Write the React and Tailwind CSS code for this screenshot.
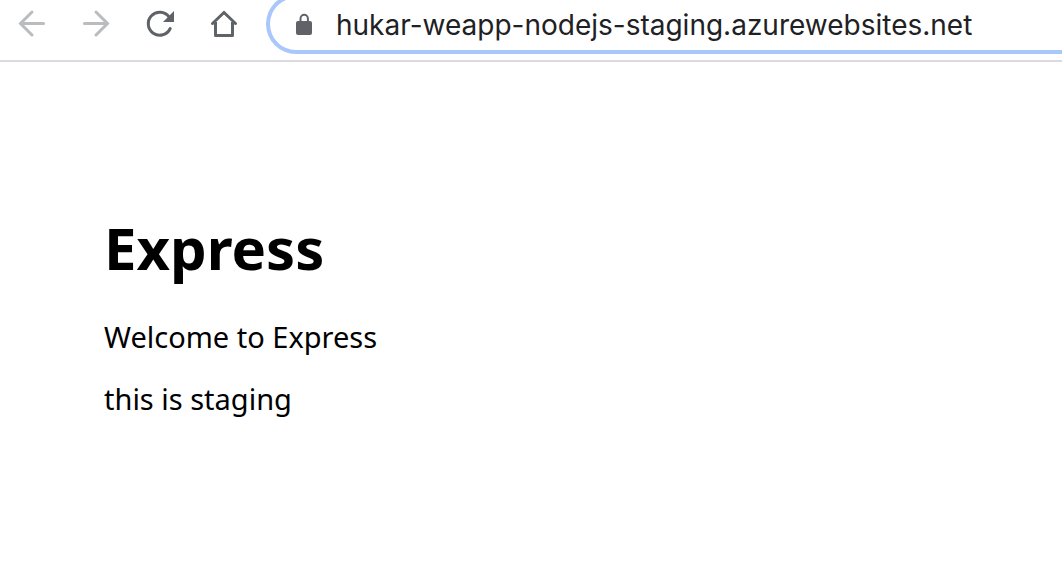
function ToolbarButton({ label, disabled, children }) {
  return (
    <button
      type="button"
      aria-label={label}
      disabled={disabled}
      className={disabled ? "text-[#babcbe]" : "text-[#5f6368]"}
    >
      <svg viewBox="0 0 32 32" className="block size-8" fill="none" stroke="currentColor" strokeWidth="3">
        {children}
      </svg>
    </button>
  );
}

function BrowserBar() {
  return (
    <header className="flex h-[62px] items-end gap-[26px] border-b-2 border-[#dadae0] pb-1.5 pl-4">
      <nav aria-label="Browser" className="flex h-[60px] shrink-0 items-center gap-8">
        <ToolbarButton label="Back" disabled>
          <path d="M27.5 15.5H5M16 4 4.5 15.5 16 27" strokeLinecap="round" />
        </ToolbarButton>
        <ToolbarButton label="Forward" disabled>
          <path d="M4.5 15.5H27M16 4l11.5 11.5L16 27" strokeLinecap="round" />
        </ToolbarButton>
        <ToolbarButton label="Reload">
          <path d="M25 8.8A11.5 11.5 0 1 0 26.2 20.5" strokeLinecap="round" />
          <path d="M30 3v11H19z" fill="currentColor" stroke="none" />
        </ToolbarButton>
        <ToolbarButton label="Home">
          <path d="M4.5 15.5 16 4.5l11.5 11" strokeLinecap="round" />
          <path d="M7.5 14v13.5h17V14" strokeLinejoin="round" />
        </ToolbarButton>
      </nav>
      <label className="flex h-[60px] min-w-0 grow items-center gap-5 rounded-l-full border-4 border-r-0 border-[#a8c7fa] pl-[22px]">
        <svg viewBox="0 0 24 24" className="size-6 shrink-0" aria-hidden="true">
          <rect x="4" y="9" width="16" height="14" rx="2" fill="#5f6368" />
          <path d="M8.5 10V6.5a3.7 3.7 0 0 1 7.4 0V10" fill="none" stroke="#5f6368" strokeWidth="2" />
        </svg>
        <input
          type="text"
          aria-label="Address"
          defaultValue="hukar-weapp-nodejs-staging.azurewebsites.net"
          className="min-w-0 grow bg-transparent pt-px font-['Inter',sans-serif] text-[28px] leading-9 text-[#202124] outline-none"
        />
      </label>
    </header>
  );
}

export default function App() {
  return (
    <div className="min-h-screen bg-white">
      <BrowserBar />
      <main className="px-[104px] pt-[152px] pb-16 font-['Noto_Sans',sans-serif] text-[29px] leading-[34px] text-black">
        <h1 className="text-[58px] leading-[68px] font-bold">Express</h1>
        <p className="mt-[38px]">Welcome to Express</p>
        <p className="mt-7">this is staging</p>
      </main>
    </div>
  );
}
